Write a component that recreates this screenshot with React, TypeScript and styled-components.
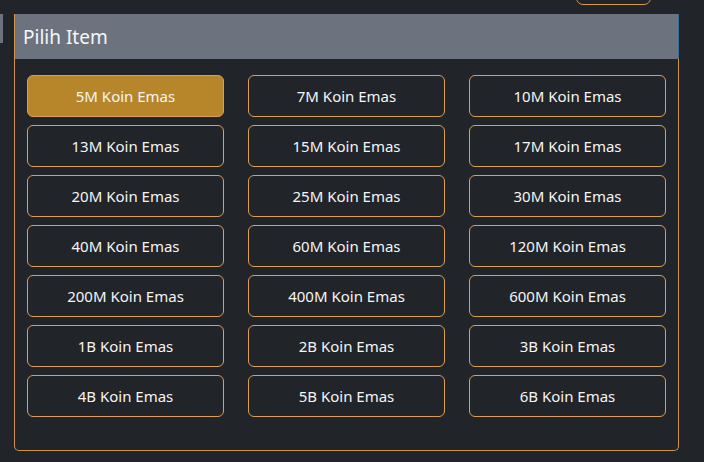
import React, { useState } from 'react';
import styled, { createGlobalStyle } from 'styled-components';

const GlobalStyle = createGlobalStyle`
  html, body { margin: 0; padding: 0; background: #212429; }
  body { font-family: 'Noto Sans', 'Open Sans', sans-serif; color: #fff; overflow: hidden; }
`;

/* -------------------------- styles -------------------------- */
const Page = styled.div` width: 704px; height: 462px; display: flex; flex-direction: column; `;
const TopBar = styled.div`
  height: 14px; display: flex; justify-content: flex-end; padding-right: 53px; overflow: hidden;
`;
const TopButton = styled.div`
  width: 75px; height: 20px; margin-top: -15px; box-sizing: border-box;
  border: 1px solid #d99a4c; border-radius: 7px; background: #212429;
`;
const Main = styled.div` display: flex; align-items: flex-start; `;
const SideEdge = styled.div` width: 3px; height: 29px; background: #6c737f; margin-right: 11px; `;
const Panel = styled.div`
  width: 665px; box-sizing: border-box; border: 1px solid #cf9448; border-top: none;
  border-radius: 0 0 5px 5px; background: #212429;
`;
const Header = styled.div`
  height: 45px; background: #6c737f; display: flex; align-items: center;
  padding-left: 8px; font-size: 19px; color: #f4f6f8; border-right: 1px solid #3c6f95;
  margin-right: -1px; box-sizing: border-box;
`;
const Grid = styled.div`
  display: grid; grid-template-columns: repeat(3, 197px); column-gap: 24px; row-gap: 8px;
  padding: 16px 12px 33px;
`;
const Item = styled.button<{ $active?: boolean }>`
  height: 42px; border-radius: 6px; border: 1px solid #dc9f52;
  background: ${p => (p.$active ? '#b7862a' : '#212429')};
  color: #f5f5f5; font-family: 'Noto Sans', 'Open Sans', sans-serif; font-size: 15px;
  cursor: pointer; padding: 0;
`;

const items = [
  '5M', '7M', '10M', '13M', '15M', '17M', '20M', '25M', '30M', '40M', '60M', '120M',
  '200M', '400M', '600M', '1B', '2B', '3B', '4B', '5B', '6B',
];

/* ------------------------- component ------------------------ */
const App: React.FC = () => {
  const [selected, setSelected] = useState(0);
  return (
    <Page>
      <GlobalStyle />
      <TopBar><TopButton /></TopBar>
      <Main>
        <SideEdge />
        <Panel>
          <Header>Pilih Item</Header>
          <Grid>
            {items.map((it, i) => (
              <Item key={it} $active={i === selected} onClick={() => setSelected(i)}>
                {it} Koin Emas
              </Item>
            ))}
          </Grid>
        </Panel>
      </Main>
    </Page>
  );
};

export default App;
